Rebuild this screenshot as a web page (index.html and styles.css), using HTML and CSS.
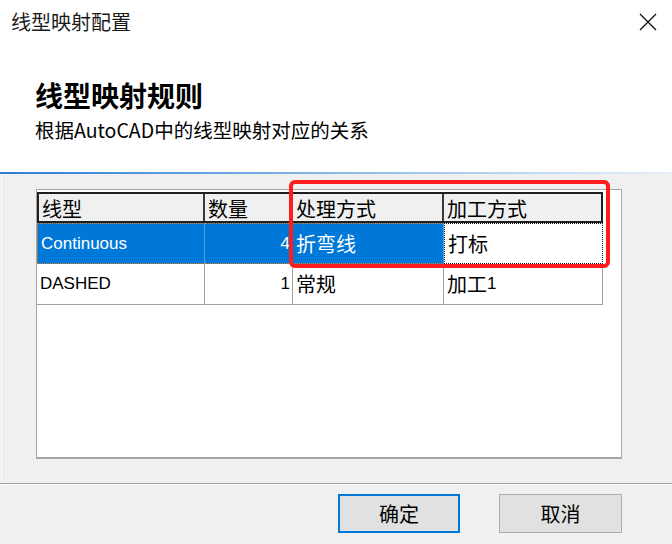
FILE: index.html
```html
<!DOCTYPE html>
<html lang="zh-CN">
<head>
<meta charset="utf-8">
<title>线型映射配置</title>
<link rel="stylesheet" href="styles.css">
</head>
<body>
<div class="dialog">
  <div class="titlebar">
    <span class="title">线型映射配置</span>
    <svg class="close" width="18" height="18" viewBox="0 0 18 18"><path d="M1 1L17 17M17 1L1 17" stroke="#111" stroke-width="1.3" fill="none"/></svg>
  </div>
  <div class="header">
    <div class="heading">线型映射规则</div>
    <div class="subtitle">根据AutoCAD中的线型映射对应的关系</div>
  </div>
  <div class="rule"></div>
  <div class="content">
    <div class="listbox">
      <div class="grid">
        <div class="row head">
          <div class="cell">线型</div>
          <div class="cell">数量</div>
          <div class="cell">处理方式</div>
          <div class="cell">加工方式</div>
        </div>
        <div class="row sel">
          <div class="cell en">Continuous</div>
          <div class="cell en num">4</div>
          <div class="cell">折弯线</div>
          <div class="cell focus">打标</div>
        </div>
        <div class="row">
          <div class="cell en">DASHED</div>
          <div class="cell en num">1</div>
          <div class="cell">常规</div>
          <div class="cell">加工<span class="en">1</span></div>
        </div>
      </div>
    </div>
  </div>
  <div class="footer">
    <button class="btn default">确定</button>
    <button class="btn">取消</button>
  </div>
  <div class="highlight"></div>
</div>
</body>
</html>
```

FILE: styles.css
```css
html, body {
  margin: 0;
  padding: 0;
}
body {
  width: 672px;
  height: 544px;
  background: #f0f0f0;
  font-family: "Noto Sans CJK SC", sans-serif;
  color: #000;
  overflow: hidden;
}
.dialog {
  position: relative;
  width: 672px;
  height: 544px;
  display: flex;
  flex-direction: column;
}
.titlebar {
  height: 44px;
  background: #fff;
  display: flex;
  align-items: center;
  justify-content: space-between;
  padding: 0 15px 0 11px;
}
.title {
  font-size: 20px;
  line-height: 24px;
  color: #1a1a1a;
}
.close {
  display: block;
}
.header {
  height: 128px;
  background: #fff;
  padding-left: 35px;
  box-sizing: border-box;
  padding-top: 34px;
}
.heading {
  font-size: 28px;
  font-weight: 700;
  line-height: 34px;
}
.subtitle {
  font-size: 19.5px;
  line-height: 26px;
  margin-top: 5px;
}
.rule {
  height: 2px;
  background: linear-gradient(to right, #2b7dd3, #9cc4ec 60%, #e6eff9);
}
.content {
  height: 309px;
  margin-left: 1px;
  border-left: 1px solid #fdfdfd;
  padding: 15px 0 0 34px;
  box-sizing: border-box;
}
.listbox {
  width: 586px;
  height: 270px;
  background: #fff;
  border: 1px solid #a6a6a6;
  border-bottom-width: 2px;
  box-sizing: border-box;
  padding: 2px 0 0 0;
}
.grid {
  width: 566px;
}
.row {
  display: grid;
  grid-template-columns: 168px 88px 151px 159px;
  height: 41px;
  box-sizing: border-box;
  border-bottom: 1px solid #a0a0a0;
}
.cell {
  box-sizing: border-box;
  border-right: 1px solid #a0a0a0;
  font-size: 20px;
  line-height: 24px;
  padding: 0 3px;
  display: flex;
  align-items: center;
  white-space: nowrap;
}
.en {
  font-family: "Liberation Sans", sans-serif;
  font-size: 17px;
}
.num {
  justify-content: flex-end;
  padding-right: 2px;
}
.row.head {
  height: 31px;
  background: #f0f0f0;
  border: 2px solid #1e1e1e;
  grid-template-columns: 166px 88px 151px 157px;
}
.row.head .cell {
  border-right: 2px solid #3a3a3a;
  padding-top: 2px;
}
.row.head .cell:last-child {
  border-right: none;
}
.row.sel .cell {
  background: #0078d7;
  color: #fff;
  border-top: 1px dotted #e2801e;
  border-bottom: 1px dotted #e2801e;
  border-right: 1px solid #5a9fe0;
}
.row.sel .cell:first-child {
  border-left: 1px dotted #e2801e;
}
.row.sel .cell.focus {
  background: #fff;
  color: #000;
  border: 1px dotted #111;
}
.row.sel {
  border-bottom: none;
}
.footer {
  flex: 1;
  border-top: 1px solid #a0a0a0;
  box-shadow: inset 0 1px 0 #fff;
  display: flex;
  justify-content: flex-end;
  align-items: flex-start;
  gap: 39px;
  padding: 10px 50px 0 0;
}
.btn {
  width: 123px;
  height: 39px;
  background: #e1e1e1;
  border: 1px solid #adadad;
  font-family: "Noto Sans CJK SC", sans-serif;
  font-size: 20px;
  line-height: 24px;
  color: #000;
  padding: 0;
  margin: 0;
}
.btn.default {
  width: 122px;
  border: 2px solid #0078d7;
}
.highlight {
  position: absolute;
  left: 289px;
  top: 180px;
  width: 321px;
  height: 88px;
  box-sizing: border-box;
  border: 4px solid #ff1c1c;
  border-radius: 6px;
}
```
